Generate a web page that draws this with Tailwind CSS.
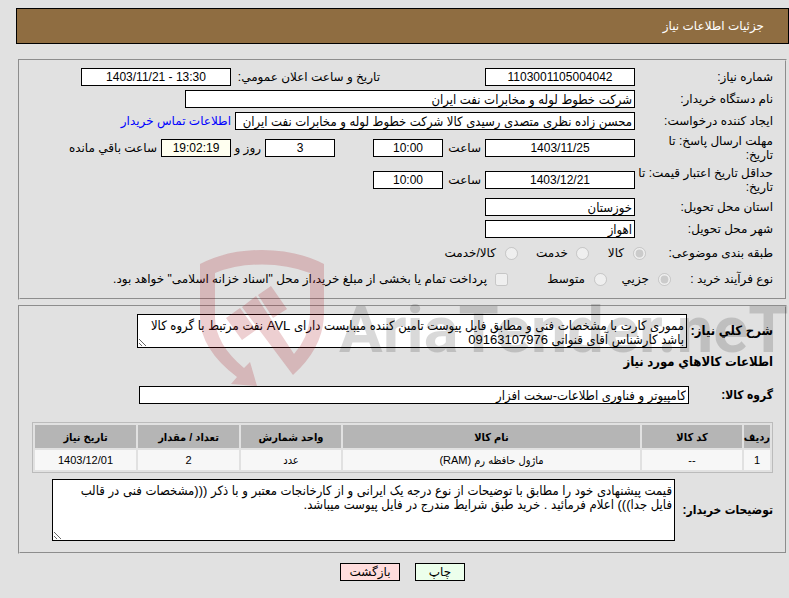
<!DOCTYPE html>
<html lang="fa" dir="rtl">
  <head>
    <meta charset="UTF-8" />
    <meta name="viewport" content="width=device-width, initial-scale=1.0" />
    <script src="https://cdn.jsdelivr.net/npm/@tailwindcss/browser@4"></script>
    <title>جزئیات اطلاعات نیاز</title>
  </head>
  <body
    class="relative bg-[#e1e1e1] pt-2 pl-4 text-black text-[12px] leading-[14px] font-['Liberation_Sans','DejaVu_Sans',sans-serif]"
  >
    <header class="flex items-center h-9 pr-6 bg-[#8f6d41] border border-black text-white">
      <h1>جزئیات اطلاعات نیاز</h1>
    </header>

    <main class="mt-[15px] ml-0.5 mr-[2px]">
      <!-- General information -->
      <section class="border-2 border-[#e1e1e1] [border-style:groove] pt-[5px] pb-[6px] pr-3">
        <div class="flex items-center min-h-[22px]">
          <label for="need-no" class="w-[138px] shrink-0">شماره نیاز:</label>
          <input id="need-no" type="text" readonly value="1103001105004042" class="w-[150px] h-[18px] bg-white border border-black text-center" />
          <label for="announce" class="w-[149px] mr-[105px] shrink-0">تاریخ و ساعت اعلان عمومي:</label>
          <input id="announce" type="text" dir="ltr" readonly value="1403/11/21 - 13:30" class="w-[150px] h-[18px] bg-white border border-black text-center" />
        </div>
        <div class="flex items-center min-h-[22px]">
          <label for="org" class="w-[138px] shrink-0">نام دستگاه خریدار:</label>
          <input id="org" type="text" readonly value="شرکت خطوط لوله و مخابرات نفت ایران" class="w-[450px] h-[18px] px-0.5 bg-white border border-black text-[13px] font-['Liberation_Sans','DejaVu_Sans_Condensed',sans-serif]" />
        </div>
        <div class="flex items-center min-h-[22px]">
          <label for="creator" class="w-[138px] shrink-0">ایجاد کننده درخواست:</label>
          <input id="creator" type="text" readonly value="محسن زاده نظری متصدی رسیدی کالا شرکت خطوط لوله و مخابرات نفت ایران" class="w-[400px] h-[18px] px-0.5 bg-white border border-black text-[13px] font-['Liberation_Sans','DejaVu_Sans_Condensed',sans-serif]" />
          <a href="#" class="mr-1 text-[#0000ff]">اطلاعات تماس خریدار</a>
        </div>
        <div class="flex items-center min-h-8">
          <label for="reply-date" class="w-[138px] shrink-0 pl-6">مهلت ارسال پاسخ: تا تاریخ:</label>
          <input id="reply-date" type="text" readonly value="1403/11/25" class="w-[150px] h-[18px] bg-white border border-black text-center" />
          <label for="reply-time" class="w-[42px] pr-1">ساعت</label>
          <input id="reply-time" type="text" readonly value="10:00" class="w-[70px] h-[18px] bg-white border border-black text-center" />
          <input type="text" readonly aria-label="روز" value="3" class="w-[70px] h-[18px] mr-[38px] bg-white border border-black text-center" />
          <label for="remain" class="w-[34px] pr-1">روز و</label>
          <input id="remain" type="text" readonly value="19:02:19" class="w-[70px] h-[18px] bg-[#fffff0] border border-black text-center" />
          <span class="mr-1">ساعت باقي مانده</span>
        </div>
        <div class="flex items-center min-h-8">
          <label for="price-date" class="w-[138px] shrink-0">حداقل تاریخ اعتبار قیمت: تا<br />تاریخ:</label>
          <input id="price-date" type="text" readonly value="1403/12/21" class="w-[150px] h-[18px] bg-white border border-black text-center" />
          <label for="price-time" class="w-[42px] pr-1">ساعت</label>
          <input id="price-time" type="text" readonly value="10:00" class="w-[70px] h-[18px] bg-white border border-black text-center" />
        </div>
        <div class="flex items-center min-h-[22px]">
          <label for="province" class="w-[138px] shrink-0">استان محل تحویل:</label>
          <input id="province" type="text" readonly value="خوزستان" class="w-[150px] h-[18px] px-0.5 bg-white border border-black text-[13px] font-['Liberation_Sans','DejaVu_Sans_Condensed',sans-serif]" />
        </div>
        <div class="flex items-center min-h-[22px]">
          <label for="city" class="w-[138px] shrink-0">شهر محل تحویل:</label>
          <input id="city" type="text" readonly value="اهواز" class="w-[150px] h-[18px] px-0.5 bg-white border border-black text-[13px] font-['Liberation_Sans','DejaVu_Sans_Condensed',sans-serif]" />
        </div>
        <div class="flex items-center min-h-[26px]">
          <span class="w-[127px] shrink-0">طبقه بندی موضوعی:</span>
          <input id="goods" type="radio" name="kind" disabled checked class="size-[13px]" />
          <label for="goods" class="w-11 pr-[9px]">کالا</label>
          <input id="service" type="radio" name="kind" disabled class="size-[13px]" />
          <label for="service" class="w-[58px] pr-2">خدمت</label>
          <input id="both" type="radio" name="kind" disabled class="size-[13px]" />
          <label for="both" class="pr-[9px]">کالا/خدمت</label>
        </div>
        <div class="flex items-center min-h-[26px]">
          <span class="w-[102px] shrink-0">نوع فرآیند خرید :</span>
          <input id="small" type="radio" name="process" disabled checked class="size-[13px]" />
          <label for="small" class="w-[51px] pr-[9px]">جزیي</label>
          <input id="medium" type="radio" name="process" disabled class="size-[13px]" />
          <label for="medium" class="w-[86px] pr-[9px]">متوسط</label>
          <input id="bonds" type="checkbox" disabled class="size-[13px]" />
          <label for="bonds" class="pr-2">پرداخت تمام یا بخشی از مبلغ خرید،از محل "اسناد خزانه اسلامی" خواهد بود.</label>
        </div>
      </section>

      <!-- Requested goods -->
      <section class="mt-[5px] border-2 border-[#e1e1e1] [border-style:groove] pt-[7px] pb-[11px] px-3">
        <div class="flex items-center">
          <label for="summary" class="w-[86px] shrink-0 font-bold text-[13px] font-['Liberation_Sans','DejaVu_Sans_Condensed',sans-serif]">شرح کلي نیاز:</label>
          <textarea id="summary" readonly class="block w-[550px] h-[34px] pt-1 px-0.5 bg-white border border-black resize overflow-hidden text-[13px] leading-[14px] font-['Liberation_Sans','DejaVu_Sans_Condensed',sans-serif]">مموری کارت با مشخصات فنی و مطابق فایل پیوست تامین کننده میبایست دارای AVL نفت مرتبط با گروه کالا باشد کارشناس آقای قنواتی 09163107976</textarea>
        </div>
        <h2 class="mt-[7px] font-bold text-[13px] leading-[14px] font-['Liberation_Sans','DejaVu_Sans_Condensed',sans-serif]">اطلاعات کالاهاي مورد نیاز</h2>
        <div class="flex items-center mt-[17px]">
          <label for="group" class="w-[84px] shrink-0 font-bold font-['Liberation_Sans','DejaVu_Sans_Condensed',sans-serif]">گروه کالا:</label>
          <input id="group" type="text" readonly value="کامپیوتر و فناوری اطلاعات-سخت افزار" class="w-[550px] h-[18px] px-0.5 bg-white border border-black text-[13px] font-['Liberation_Sans','DejaVu_Sans_Condensed',sans-serif]" />
        </div>
        <table class="w-full mt-[18px] table-fixed border border-[#bbb] border-separate border-spacing-[2px] text-[11px] text-center font-['Liberation_Sans','DejaVu_Sans_Condensed',sans-serif]">
          <thead>
            <tr class="h-[23px] bg-[#b5b5b5]">
              <th class="w-[26px] p-0 font-bold">ردیف</th>
              <th class="w-[100px] p-0 font-bold">کد کالا</th>
              <th class="p-0 font-bold">نام کالا</th>
              <th class="w-[100px] p-0 font-bold">واحد شمارش</th>
              <th class="w-[101px] p-0 font-bold">تعداد / مقدار</th>
              <th class="w-[101px] p-0 font-bold">تاریخ نیاز</th>
            </tr>
          </thead>
          <tbody>
            <tr class="h-5 bg-[#f7f7f7]">
              <td class="p-0">1</td>
              <td class="p-0">--</td>
              <td class="p-0">ماژول حافظه رم (RAM)</td>
              <td class="p-0">عدد</td>
              <td class="p-0">2</td>
              <td class="p-0">1403/12/01</td>
            </tr>
          </tbody>
        </table>
        <div class="flex items-center mt-1.5">
          <label for="notes" class="w-[98px] shrink-0 font-bold font-['Liberation_Sans','DejaVu_Sans_Condensed',sans-serif]">توضیحات خریدار:</label>
          <textarea id="notes" readonly class="block w-[623px] h-[62px] pt-1 pr-0.5 pl-4 bg-white border border-black resize overflow-hidden text-[13px] leading-[14px] font-['Liberation_Sans','DejaVu_Sans_Condensed',sans-serif]">قیمت پیشنهادی خود را مطابق با توضیحات از نوع درجه یک ایرانی و از کارخانجات معتبر و با ذکر (((مشخصات فنی در قالب فایل جدا))) اعلام فرمائید . خرید طبق شرایط مندرج در فایل پیوست میباشد.</textarea>
        </div>
      </section>
    </main>

    <div class="flex justify-center gap-[15px] mt-[9px]">
      <button type="button" class="w-[50px] h-[18px] bg-[#ecffec] border border-black">چاپ</button>
      <button type="button" class="w-[60px] h-[18px] bg-[#ffdddd] border border-black">بازگشت</button>
    </div>

    <!-- Watermark -->
    <svg
      class="absolute left-[200px] top-[250px] pointer-events-none"
      width="589"
      height="140"
      viewBox="0 0 589 140"
      direction="ltr"
      aria-hidden="true"
    >
      <g fill="#a50f19" fill-opacity="0.2">
        <path d="M0 14Q27 0 62 0T124 14V63Q124 97 93 125L42 57L56 46L94 104Q110 86 110 63V23Q88 14.5 62 14.5T15 23V67Q15 94 44 118L50 112L57 136L31 134L37 127Q0 99 0 67Z" />
        <path d="M26 68L40 58L56 80L42 90Z" />
        <path d="M58 45L71 36L87 59L73 68Z" />
      </g>
      <text x="139" y="102" fill="#000" fill-opacity="0.15" font-family="Roboto, sans-serif" font-weight="700" font-size="65">AriaTender.neT</text>
    </svg>
  </body>
</html>
